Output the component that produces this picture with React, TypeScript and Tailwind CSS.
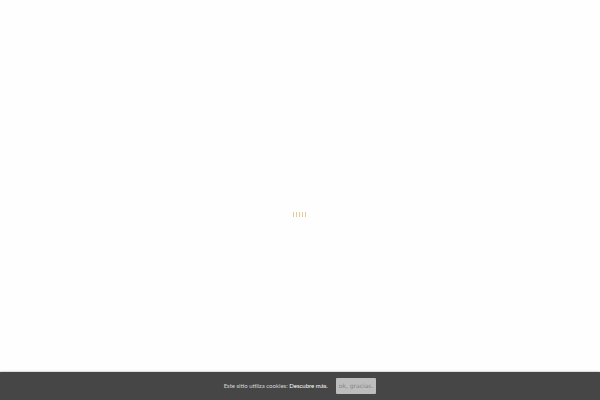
import React from 'react';

const bars = [0, 1, 2, 3, 4];

const Loader: React.FC = () => {
    return (
        <div role="status" aria-label="Cargando" className="flex gap-[2px] pt-14 pr-[2px]">
            {bars.map((bar) => (
                <span key={bar} className="h-[5px] w-px bg-[#e6cb92]" />
            ))}
        </div>
    );
};

const CookieBar: React.FC = () => {
    return (
        <div className="flex h-7 items-center justify-center gap-2 bg-[#464646] pb-px text-[6px] leading-none text-[#d8d8d8] shadow-[0_0_2px_rgba(0,0,0,0.4)]">
            <p>
                Este sitio utiliza cookies:{' '}
                <a href="#cookies" className="text-white">
                    Descubre más.
                </a>
            </p>
            <button
                type="button"
                className="h-4 rounded-[1px] bg-[#bdbdbd] px-[3px] font-['DejaVu_Sans',sans-serif] text-[#858585]"
            >
                ok, gracias.
            </button>
        </div>
    );
};

const App: React.FC = () => {
    return (
        <div className="flex min-h-screen flex-col bg-[#fefefe] font-['Lato',sans-serif]">
            <main className="flex flex-1 items-center justify-center">
                <Loader />
            </main>
            <CookieBar />
        </div>
    );
};

export default App;
